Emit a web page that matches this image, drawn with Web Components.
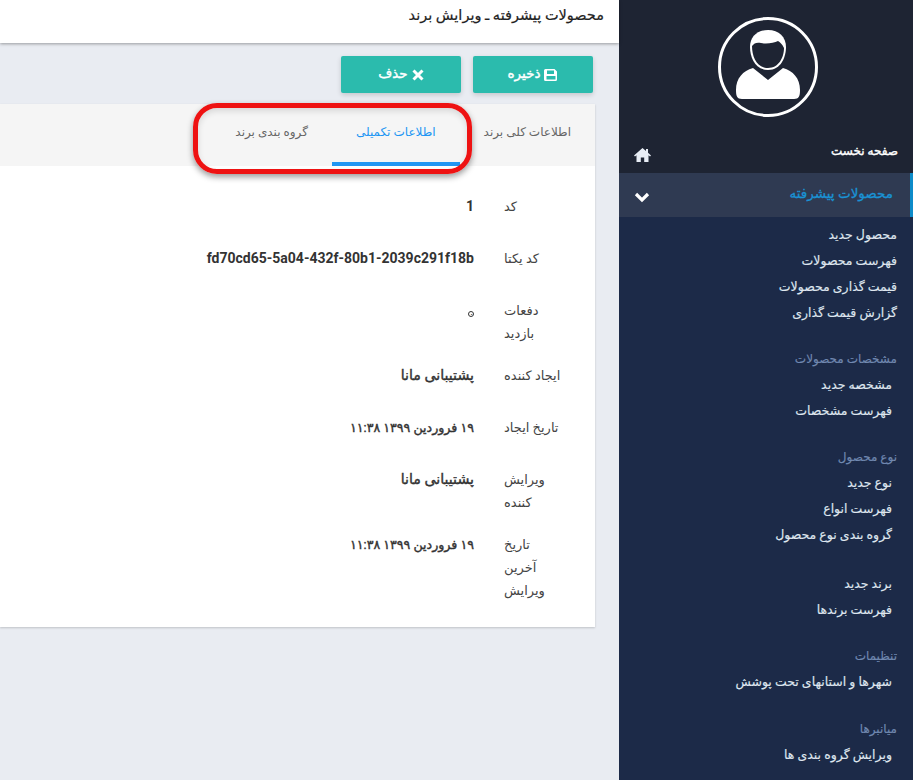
<!DOCTYPE html>
<html lang="fa" dir="rtl">
<head>
<meta charset="utf-8">
<title>ویرایش برند</title>
<style>
    html, body { margin: 0; height: 100%; overflow: hidden; }
    body { background: #e9ecf2; font-family: Roboto, "DejaVu Sans", sans-serif; font-size: 13px; color: #333; }
</style>
</head>
<body>
<admin-page>
    <side-nav slot="nav">
        <nav-group>
            <nav-item inset="0">محصول جدید</nav-item>
            <nav-item inset="0">فهرست محصولات</nav-item>
            <nav-item inset="0">قیمت گذاری محصولات</nav-item>
            <nav-item inset="0">گزارش قیمت گذاری</nav-item>
        </nav-group>
        <nav-group heading="مشخصات محصولات">
            <nav-item>مشخصه جدید</nav-item>
            <nav-item>فهرست مشخصات</nav-item>
        </nav-group>
        <nav-group heading="نوع محصول">
            <nav-item>نوع جدید</nav-item>
            <nav-item>فهرست انواع</nav-item>
            <nav-item>گروه بندی نوع محصول</nav-item>
        </nav-group>
        <nav-group gap="2">
            <nav-item>برند جدید</nav-item>
            <nav-item>فهرست برندها</nav-item>
        </nav-group>
        <nav-group heading="تنظیمات">
            <nav-item>شهرها و استانهای تحت پوشش</nav-item>
        </nav-group>
        <nav-group heading="میانبرها" gap="1">
            <nav-item>ویرایش گروه بندی ها</nav-item>
        </nav-group>
    </side-nav>
    <page-header slot="main">محصولات پیشرفته ـ ویرایش برند</page-header>
    <action-bar slot="main">
        <action-button icon="save">ذخیره</action-button>
        <action-button icon="times">حذف</action-button>
    </action-bar>
    <detail-card slot="main">
        <tab-bar>
            <tab-item>اطلاعات کلی برند</tab-item>
            <tab-item active>اطلاعات تکمیلی</tab-item>
            <tab-item>گروه بندی برند</tab-item>
        </tab-bar>
        <detail-row label="کد"><span dir="ltr" class="latin">1</span></detail-row>
        <detail-row label="کد یکتا"><span dir="ltr" class="latin">fd70cd65-5a04-432f-80b1-2039c291f18b</span></detail-row>
        <detail-row label="دفعات بازدید"><span style="display:inline-block;box-sizing:border-box;width:6px;height:6px;margin:0 0 0 1px;border:1.500px solid #333;border-radius:50%;color:transparent;font-size:5px;line-height:5px;overflow:hidden;vertical-align:-2px">۰</span></detail-row>
        <detail-row label="ایجاد کننده">پشتیبانی مانا</detail-row>
        <detail-row label="تاریخ ایجاد"><span class="date">۱۹ فروردین ۱۳۹۹ ۱۱:۳۸</span></detail-row>
        <detail-row label="ویرایش کننده">پشتیبانی مانا</detail-row>
        <detail-row label="تاریخ آخرین ویرایش"><span class="date">۱۹ فروردین ۱۳۹۹ ۱۱:۳۸</span></detail-row>
    </detail-card>
</admin-page>

<script>
(() => {

    const define = (name, css, html, extra) => {
        customElements.define(name, class extends HTMLElement {
            constructor() {
                super();
                this.attachShadow({mode: 'open'});
                this.shadowRoot.innerHTML = `<style>${css}</style>${html}`;
            }
            connectedCallback() {
                if (extra) extra.call(this);
            }
        });
    };

    define('admin-page', `
        :host { display: flex; flex-direction: row; width: 913px; height: 780px; overflow: hidden; position: relative; }
        .nav { flex: 0 0 294px; }
        .main { flex: 0 0 619px; }
        .mark {
            position: absolute; left: 193px; top: 103px; width: 279px; height: 71px;
            box-sizing: border-box; border: 5px solid #ee1212; border-radius: 24px;
            box-shadow: 0 3px 6px rgba(0,0,0,.4), inset 0 3px 6px rgba(0,0,0,.12);
            pointer-events: none;
        }
    `, `
        <div class="nav"><slot name="nav"></slot></div>
        <div class="main"><slot name="main"></slot></div>
        <div class="mark"></div>
    `);

    define('side-nav', `
        :host { display: block; height: 780px; background: #1c2a48; color: #dfe6ef; overflow: hidden; }
        .top { background: #1e2433; height: 173px; display: flex; flex-direction: column; align-items: center; }
        .avatar { margin: 16px 0 0 4px; }
        .home {
            align-self: stretch; display: flex; justify-content: space-between; align-items: flex-start;
            margin-top: 23px; padding: 0 15px; height: 20px; line-height: 20px;
            color: #fff; font-size: 12px; -webkit-text-stroke: .4px #fff;
        }
        .home svg { margin-top: 7px; }
        .active {
            height: 44px; background: #2f3a52; border-right: 3px solid #0d8bc9; box-sizing: border-box;
            display: flex; justify-content: space-between; align-items: center; padding: 0 17px 0 15px;
            color: #1a92d4; font-size: 13.500px; -webkit-text-stroke: .3px #1a92d4;
        }
        .active span { margin-bottom: 4px; }
        .active svg { margin-top: 4px; }
        .list { padding-top: 5px; }
    `, `
        <div class="top">
            <svg class="avatar" width="102" height="102" viewBox="0 0 102 102">
                <circle cx="51" cy="51" r="48.500" fill="none" stroke="#fff" stroke-width="3"/>
                <path fill="#fff" d="M51 14c-11 0-18 7-18 17 0 10 5 23 18 23s18-13 18-23c0-10-7-17-18-17z"/>
                <path fill="#1e2433" d="M35 30c2-3 5-4 9-3 6 1 13 0 17-2 2 1 4 3 6 7 0 9-5 20-16 20s-16-11-16-22z"/>
                <path fill="#fff" d="M36 52l15 12 15-12c10 3 17 10 17 22 0 6-1 9-6 9H25c-5 0-6-3-6-9 0-12 7-19 17-22z"/>
            </svg>
            <div class="home">
                <span>صفحه نخست</span>
                <svg width="17" height="14" viewBox="0 0 17 14"><path fill="#e8edf5" d="M8.500 0 0 7.400l1 1.100L2.500 7.300V14h4.300V9.500h3.400V14h4.300V7.300L16 8.500l1-1.100-3-2.600V1h-2v2L8.500 0z"/></svg>
            </div>
        </div>
        <div class="active">
            <span>محصولات پیشرفته</span>
            <svg width="16" height="11" viewBox="0 0 16 11"><path fill="none" stroke="#fff" stroke-width="3.200" d="M2 2l6 6 6-6"/></svg>
        </div>
        <div class="list"><slot></slot></div>
    `);

    define('nav-group', `
        :host { display: block; margin-bottom: 21px; }
        :host([gap="1"]) { margin-top: 22px; }
        :host([gap="2"]) { margin-top: 23px; }
        .head { height: 25px; line-height: 25px; padding-right: 16px; color: #7088b0; font-size: 12px; -webkit-text-stroke: .15px #7088b0; }
        .head.empty { display: none; }
    `, `
        <div class="head"></div>
        <slot></slot>
    `, function() {
        const head = this.shadowRoot.querySelector('.head');
        const text = this.getAttribute('heading') || '';
        head.textContent = text;
        if (!text) head.classList.add('empty');
    });

    define('nav-item', `
        :host {
            display: block; height: 26px; line-height: 26px; padding-right: 21px;
            font-size: 12.500px; color: #dfe6ef; -webkit-text-stroke: .15px #dfe6ef;
        }
        :host([inset="0"]) { padding-right: 16px; }
    `, `<slot></slot>`);

    define('page-header', `
        :host {
            display: block; height: 43px; line-height: 31px; background: #fff; color: #222;
            padding-right: 15px; font-size: 14.500px; -webkit-text-stroke: .2px #222;
            box-shadow: 0 1px 3px rgba(0,0,0,.35); position: relative;
        }
    `, `<slot></slot>`);

    define('action-bar', `
        :host { display: flex; gap: 12px; padding: 13px 26px 11px 0; }
    `, `<slot></slot>`);

    const icons = {
        save: '<svg width="14" height="14" viewBox="0 0 14 14"><path fill="#fff" fill-rule="evenodd" d="M1.500 1h9L13 3.500v8a1.500 1.500 0 0 1-1.500 1.500h-10A1.500 1.500 0 0 1 0 11.500v-9A1.500 1.500 0 0 1 1.500 1zM3 2.500V6h7V2.500H3zM2.500 8v3.500h9V8h-9z"/></svg>',
        times: '<svg width="12" height="12" viewBox="0 0 12 12"><path fill="none" stroke="#fff" stroke-width="3" d="M1.500 1.500l9 9m0-9l-9 9"/></svg>'
    };

    define('action-button', `
        :host {
            display: flex; justify-content: center; align-items: center; gap: 4px; box-sizing: border-box;
            width: 120px; height: 37px; padding-bottom: 3px; background: #2bbbad; color: #fff; border-radius: 2px;
            box-shadow: 0 2px 5px rgba(0,0,0,.16); font-size: 13.500px; -webkit-text-stroke: .4px #fff;
        }
        span { display: flex; margin-top: 3px; }
    `, `<span></span><slot></slot>`, function() {
        this.shadowRoot.querySelector('span').innerHTML = icons[this.getAttribute('icon')];
    });

    define('detail-card', `
        :host { display: block; width: 595px; margin-right: 24px; background: #fff; padding-bottom: 6px; box-shadow: 0 1px 2px rgba(0,0,0,.18); }
    `, `<slot></slot>`);

    define('tab-bar', `
        :host { display: flex; height: 62px; background: #f5f5f5; margin-bottom: 29px; }
    `, `<slot></slot>`);

    define('tab-item', `
        :host {
            display: block; box-sizing: border-box; padding: 0 24px; height: 62px;
            text-align: center; line-height: 56px; color: #666; font-size: 12px;
        }
        :host([active]) { color: #2196f3; border-bottom: 4px solid #2196f3; }
    `, `<slot></slot>`);

    define('detail-row', `
        :host { display: flex; min-height: 33px; margin-bottom: 19px; line-height: 23px; padding-right: 32px; }
        .label { flex: 0 0 59px; width: 59px; text-align: left; color: #444; font-size: 13px; }
        .value { flex: 1; margin-right: 30px; color: #333; font-size: 14.200px; -webkit-text-stroke: .4px #333; }
        ::slotted(.latin) { font-weight: 700; font-size: 14px; -webkit-text-stroke: 0; }
        ::slotted(.date) { font-size: 12.600px; }
    `, `<div class="label"></div><div class="value"><slot></slot></div>`, function() {
        this.shadowRoot.querySelector('.label').textContent = this.getAttribute('label');
    });

})();
</script>
</body>
</html>
